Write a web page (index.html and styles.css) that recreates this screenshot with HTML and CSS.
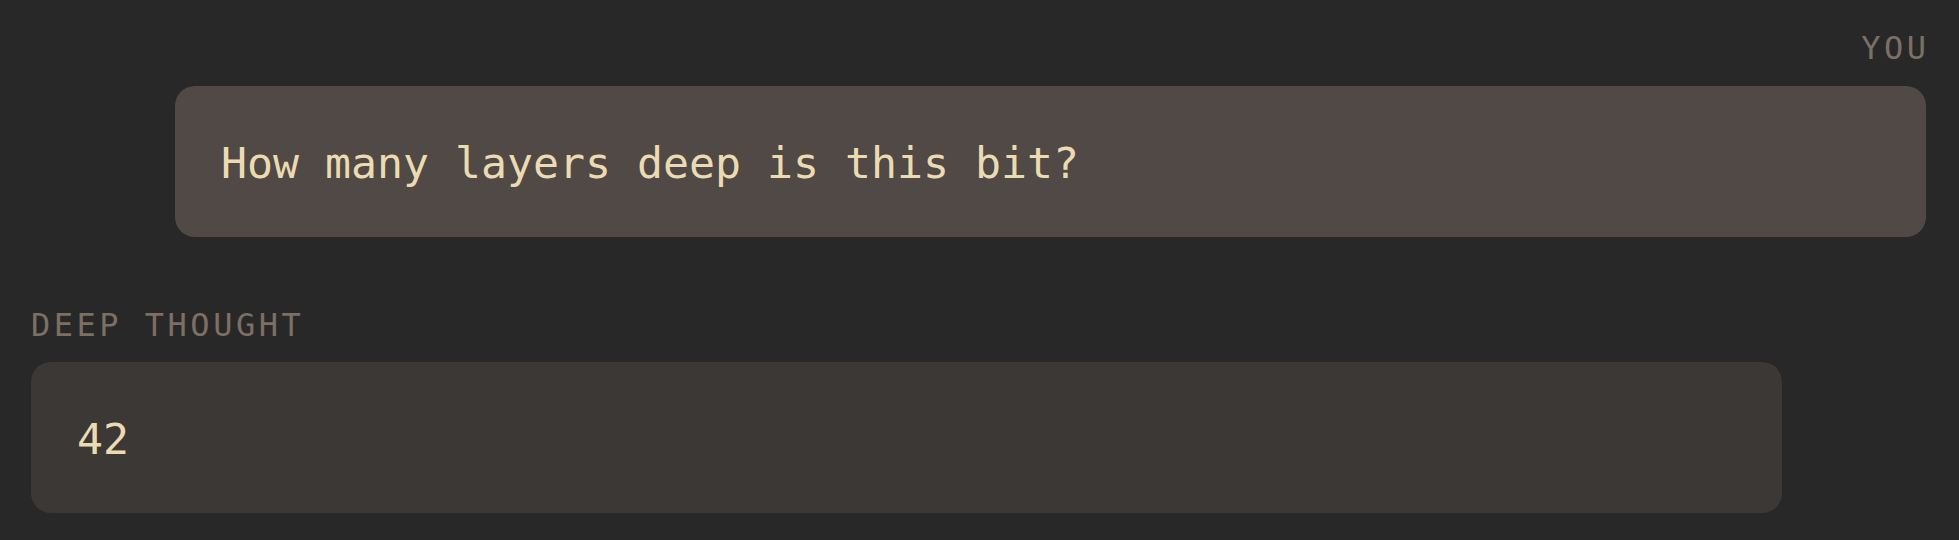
FILE: index.html
```html
<!DOCTYPE html>
<html lang="en">
<head>
<meta charset="utf-8">
<title>Chat</title>
<link rel="stylesheet" href="styles.css">
</head>
<body>
<main class="chat">
  <section class="msg msg-user">
    <div class="label">YOU</div>
    <div class="bubble bubble-user">How many layers deep is this bit?</div>
  </section>
  <section class="msg msg-bot">
    <div class="label">DEEP THOUGHT</div>
    <div class="bubble bubble-bot">42</div>
  </section>
</main>
</body>
</html>
```
FILE: styles.css
```css
html, body {
  margin: 0;
  padding: 0;
  background: #282828;
  height: 100%;
}
body {
  font-family: "DejaVu Sans Mono", "Liberation Mono", monospace;
  color: #ebdbb2;
}
.chat {
  display: flex;
  flex-direction: column;
  gap: 68px;
  padding: 28px 33px 0 31px;
}
.msg {
  display: flex;
  flex-direction: column;
  gap: 18px;
}
.msg-user {
  align-items: flex-end;
}
.msg-bot {
  align-items: flex-start;
  gap: 17px;
}
.label {
  font-size: 32px;
  line-height: 40px;
  letter-spacing: 3.5px;
  color: #7c6f64;
}
.msg-user .label {
  margin-right: -3.5px;
}
.bubble {
  box-sizing: border-box;
  width: 1751px;
  font-size: 43.2px;
  line-height: 64.8px;
  padding: 45px 46px 41px;
  border-radius: 20px;
}
.bubble-user {
  background: #504945;
}
.bubble-bot {
  background: #3c3836;
}
```
